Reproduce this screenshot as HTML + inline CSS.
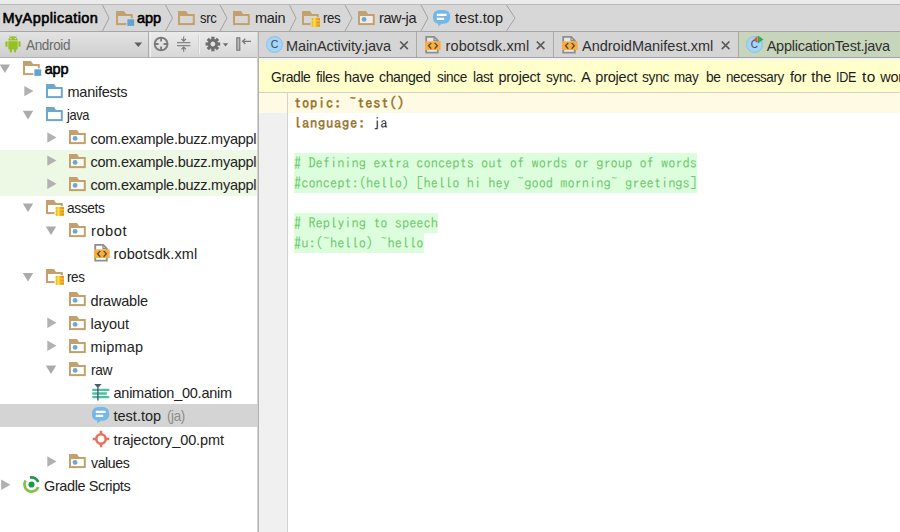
<!DOCTYPE html>
<html>
<head>
<meta charset="utf-8">
<title>MyApplication</title>
<style>
*{box-sizing:border-box;margin:0;padding:0}
html,body{width:900px;height:532px;overflow:hidden;background:#fff}
body{position:relative;font-family:"Liberation Sans",sans-serif;font-size:14.5px;color:#222}
.abs{position:absolute}
.tx{position:absolute;white-space:pre;line-height:20px;height:20px;transform-origin:0 50%}
svg{position:absolute;overflow:visible}
#topstrip{left:0;top:0;width:900px;height:4px;background:#ebebeb}
#topline{left:0;top:4px;width:900px;height:1px;background:#b9b9b9}
#crumbs{left:0;top:5px;width:900px;height:26px;background:#d7d7d7}
#crumbline{left:0;top:31px;width:900px;height:1px;background:#a6a6a6}
#toolbar{left:0;top:32px;width:257px;height:25px;background:linear-gradient(#ebebeb,#d8d8d8)}
#combo{left:0;top:32px;width:149px;height:25px;background:linear-gradient(#e3e3e3,#cfcfcf);border-right:1px solid #ababab}
#toolline{left:0;top:57px;width:257px;height:1px;background:#b2b2b2}
#tree{left:0;top:58px;width:257px;height:474px;background:#fff;overflow:hidden}
#split{left:257px;top:32px;width:2px;height:500px;background:linear-gradient(90deg,#d2d2d2 50%,#b2b2b2 50%)}
#tabs{left:259px;top:32px;width:641px;height:25px;background:#d5d5d5}
.tabsep{position:absolute;top:32px;width:1px;height:25px;background:#a9a9a9}
#tabline{left:259px;top:57px;width:641px;height:1px;background:#a3a3a3}
#tabgap{left:259px;top:58px;width:641px;height:2px;background:#f4f4f4}
#notice{left:259px;top:60px;width:641px;height:32px;background:#ffffcb}
#noticeline{left:259px;top:92px;width:641px;height:1px;background:#d0d2c6}
#gutter{left:259px;top:93px;width:28px;height:439px;background:#f0f0f0}
#gutline{left:287px;top:93px;width:1px;height:439px;background:#d3d3d3}
#curline{left:259px;top:93px;width:641px;height:19.5px;background:#fffae4}
#clip{left:0;top:0;width:257px;height:532px;overflow:hidden}
.hl{position:absolute;left:0;width:258px;background:#edf8e5}
.sel{position:absolute;left:0;width:258px;background:#d4d4d4}
.code{position:absolute;left:294px;height:20px;line-height:20px;font-family:"IPAGothic","Liberation Mono",monospace;font-size:14.4px;white-space:pre;color:#222}
.g{background:#dcfedc;color:#70c870}
.k{color:#94711f;-webkit-text-stroke:0.45px #94711f;letter-spacing:0.8px}
</style>
</head>
<body>
<svg width="0" height="0" style="position:absolute">
<defs>
<linearGradient id="gstk" x1="0" x2="1" y1="0" y2="0"><stop offset="0" stop-color="#f0a012"/><stop offset="0.320" stop-color="#ffe828"/><stop offset="0.600" stop-color="#f2a414"/><stop offset="1" stop-color="#e48c10"/></linearGradient>
<symbol id="i-folder" viewBox="0 0 17 14" overflow="visible"><path d="M0 0h8l2.200 3.200H0z" fill="#c4a06c"/><rect x="1" y="4" width="14.800" height="9.100" fill="none" stroke="#c4a06c" stroke-width="2"/></symbol>
<symbol id="i-bfolder" viewBox="0 0 17 14" overflow="visible"><path d="M0 0h8l2.200 3.200H0z" fill="#6ea7cc"/><rect x="1" y="4" width="14.800" height="9.100" fill="none" stroke="#6ea7cc" stroke-width="2"/></symbol>
<symbol id="i-pkg" viewBox="0 0 17 14" overflow="visible"><path d="M0 0h8l2.200 3.200H0z" fill="#c4a06c"/><rect x="1" y="4" width="14.800" height="9.100" fill="#fff" fill-opacity="0.550" stroke="#c4a06c" stroke-width="2"/><circle cx="6.100" cy="8.400" r="2.400" fill="#6aa9d4"/></symbol>
<symbol id="i-module" viewBox="0 0 19 16" overflow="visible"><path d="M0 0h8l2.200 3.200H0z" fill="#c4a06c"/><rect x="1" y="4" width="14.800" height="9.100" fill="none" stroke="#c4a06c" stroke-width="2"/><rect x="10.400" y="7.300" width="8" height="8" fill="currentColor"/><rect x="11.400" y="8.300" width="6.800" height="6.600" fill="#62a4cf"/></symbol>
<symbol id="i-resf" viewBox="0 0 19 16" overflow="visible"><path d="M0 0h8l2.200 3.200H0z" fill="#c4a06c"/><rect x="1" y="4" width="14.800" height="9.100" fill="none" stroke="#c4a06c" stroke-width="2"/><rect x="8.600" y="6.200" width="10" height="10" fill="currentColor"/><rect x="9.700" y="7.100" width="8.300" height="8.700" rx="0.800" fill="#e2dc9a"/><rect x="9.700" y="7.100" width="8.300" height="2.500" rx="0.700" fill="url(#gstk)"/><rect x="9.700" y="10.200" width="8.300" height="2.500" rx="0.700" fill="url(#gstk)"/><rect x="9.700" y="13.300" width="8.300" height="2.500" rx="0.700" fill="url(#gstk)"/></symbol>
<symbol id="i-xml" viewBox="0 0 16 18" overflow="visible"><path d="M1.200 0.900h8l3.600 3.600v12.200H1.200z" fill="#fff" fill-opacity="0.450" stroke="#8e8e8e" stroke-width="1.800"/><path d="M9 1v3.700h3.700" fill="none" stroke="#8e8e8e" stroke-width="1.300"/><rect x="0" y="5.400" width="15.700" height="8.600" fill="#f6ad42"/><path d="M6.300 6.900l-2.800 2.900 2.800 2.900M9.600 6.900l2.800 2.900-2.800 2.900" fill="none" stroke="#5a4a30" stroke-width="1.300"/></symbol>
<symbol id="i-anim" viewBox="0 0 18 17" overflow="visible"><path d="M1.200 5.900h15.200M1.200 9.500h12.800M1.200 13.100h15.200" stroke="#4ac2a2" stroke-width="2.300" stroke-linecap="round"/><path d="M2.100 0h7.600l-3.100 3.300v13.300h-1.400V3.300z" fill="#4b5b6b"/></symbol>
<symbol id="i-top" viewBox="0 0 18 17" overflow="visible"><path d="M6 0h5.200a6 6 0 0 1 6 6v1.800a6 6 0 0 1-6 6H8.600L5.200 16.600V13.700A6 6 0 0 1 0 7.800V6A6 6 0 0 1 6 0z" fill="#74b9e6"/><path d="M3.800 4.800h9.800M3.800 8.900h7.400" stroke="#fff" stroke-width="2.200"/></symbol>
<symbol id="i-pmt" viewBox="0 0 18 18" overflow="visible"><circle cx="9" cy="9" r="4.7" fill="none" stroke="#e8705a" stroke-width="2.6"/><path d="M9 0.700v3.500M9 13.800v3.500M0.700 9h3.500M13.800 9h3.500" stroke="#e8705a" stroke-width="2.500"/></symbol>
<symbol id="i-gradle" viewBox="0 0 17 17" overflow="visible"><path d="M15.170 10.930A7.100 7.100 0 1 1 2.680 4.430" fill="none" stroke="#86bf49" stroke-width="2.700"/><path d="M7.020 1.560A7.100 7.100 0 0 1 15.170 6.070" fill="none" stroke="#1a9a4e" stroke-width="2.700"/><circle cx="8.500" cy="8.500" r="3.100" fill="#1a9a4e"/></symbol>
<symbol id="i-cls" viewBox="0 0 18 18" overflow="visible"><circle cx="9" cy="9" r="8.3" fill="#b5dcf5" stroke="#5ea9dd" stroke-width="1.2"/></symbol>
</defs></svg>
<div id="topstrip" class="abs"></div><div id="topline" class="abs"></div>
<div id="crumbs" class="abs"></div><div id="crumbline" class="abs"></div>
<svg class="abs" style="left:0;top:5px" width="900" height="26">
<path d="M102.5 0L109 13L102.5 26" fill="none" stroke="#a2a2a2" stroke-width="1"/>
<path d="M165.5 0L172.5 13L165.5 26" fill="none" stroke="#a2a2a2" stroke-width="1"/>
<path d="M220 0L227 13L220 26" fill="none" stroke="#a2a2a2" stroke-width="1"/>
<path d="M289.5 0L296 13L289.5 26" fill="none" stroke="#a2a2a2" stroke-width="1"/>
<path d="M345 0L352 13L345 26" fill="none" stroke="#a2a2a2" stroke-width="1"/>
<path d="M421 0L428 13L421 26" fill="none" stroke="#a2a2a2" stroke-width="1"/>
<path d="M506.5 0L515 13L506.5 26" fill="none" stroke="#a2a2a2" stroke-width="1"/>
</svg>
<svg style="left:115.6px;top:10.8px;color:#d7d7d7" width="19" height="16"><use href="#i-module"/></svg>
<svg style="left:178.0px;top:10.8px;color:#fff" width="17" height="14"><use href="#i-folder"/></svg>
<svg style="left:233.0px;top:10.8px;color:#fff" width="17" height="14"><use href="#i-folder"/></svg>
<svg style="left:302.0px;top:10.8px;color:#d7d7d7" width="19" height="16"><use href="#i-resf"/></svg>
<svg style="left:358.0px;top:10.8px;color:#fff" width="17" height="14"><use href="#i-pkg"/></svg>
<svg style="left:433.0px;top:10.3px;color:#fff" width="18" height="17"><use href="#i-top"/></svg>
<span class="tx" style="left:2.40px;top:8.41px;letter-spacing:0.433px;color:#000;-webkit-text-stroke:0.6px #000">MyApplication</span>
<span class="tx" style="left:137.00px;top:8.41px;letter-spacing:-0.064px;color:#000;-webkit-text-stroke:0.6px #000">app</span>
<span class="tx" style="left:199.50px;top:8.41px;letter-spacing:-0.400px;color:#222;transform:scaleX(0.9027)">src</span>
<span class="tx" style="left:255.00px;top:8.41px;letter-spacing:-0.288px;color:#222">main</span>
<span class="tx" style="left:323.00px;top:8.41px;letter-spacing:-0.400px;color:#222;transform:scaleX(0.9166)">res</span>
<span class="tx" style="left:379.00px;top:8.41px;letter-spacing:-0.400px;color:#222">raw-ja</span>
<span class="tx" style="left:455.00px;top:8.41px;letter-spacing:0.072px;color:#222">test.top</span>
<div id="toolbar" class="abs"></div><div id="combo" class="abs"></div><div id="toolline" class="abs"></div>
<svg style="left:4.800px;top:35.200px" width="16" height="18" viewBox="0 0 16 18"><g fill="#97c024"><path d="M3.300 6.200h9.400v7.200a1 1 0 0 1-1 1H4.300a1 1 0 0 1-1-1z"/><path d="M3.300 5.500a4.700 4.200 0 0 1 9.400 0z"/><rect x="0.400" y="6.200" width="2.200" height="5.800" rx="1.100"/><rect x="13.400" y="6.200" width="2.200" height="5.800" rx="1.100"/><rect x="4.800" y="13" width="2.200" height="4.600" rx="1.100"/><rect x="9" y="13" width="2.200" height="4.600" rx="1.100"/><path d="M4.600 0.600l1.200 1.900M11.400 0.600l-1.200 1.900" stroke="#97c024" stroke-width="0.700"/></g><circle cx="5.900" cy="3.600" r="0.600" fill="#fff"/><circle cx="10.100" cy="3.600" r="0.600" fill="#fff"/></svg>
<span class="tx" style="left:26.00px;top:34.71px;letter-spacing:-0.400px;color:#6b6b6b;transform:scaleX(0.9345)">Android</span>
<svg style="left:0;top:32px" width="258" height="25" viewBox="0 32 258 25">
<path d="M134.400 42.500h7.800l-3.900 4.600z" fill="#5f5f5f"/>
<path d="M150.500 32v25" stroke="#f2f2f2" stroke-width="1"/>
<circle cx="161.100" cy="44" r="6.400" fill="none" stroke="#7a7a7a" stroke-width="1.900"/>
<path d="M161.100 37.500v4M161.100 46.500v4M154.600 44h4M163.600 44h4" stroke="#7a7a7a" stroke-width="1.800"/>
<path d="M177 42.700h13.400M177 45.600h13.400" stroke="#858585" stroke-width="1.200"/>
<path d="M183.700 36.500v4.600M181.400 38.800l2.300 2.400 2.300-2.400M183.700 51.700v-4.600M181.400 49.400l2.300-2.400 2.300 2.400" fill="none" stroke="#777" stroke-width="1.100"/>
<path d="M198.500 35v19" stroke="#d3d3d3" stroke-width="1"/><path d="M199.500 35v19" stroke="#efefef" stroke-width="1"/>
<g transform="translate(212.900 44)" fill="#6e6e6e"><circle r="3.700" fill="none" stroke="#6e6e6e" stroke-width="2.600"/><rect x="-1.600" y="-7.300" width="3.200" height="3.600"/><rect x="-1.600" y="3.700" width="3.200" height="3.600"/><rect x="-7.300" y="-1.600" width="3.600" height="3.200"/><rect x="3.700" y="-1.600" width="3.600" height="3.200"/><g transform="rotate(45)"><rect x="-1.600" y="-7.300" width="3.200" height="3.600"/><rect x="-1.600" y="3.700" width="3.200" height="3.600"/><rect x="-7.300" y="-1.600" width="3.600" height="3.200"/><rect x="3.700" y="-1.600" width="3.600" height="3.200"/></g></g>
<path d="M222.800 43.300h5.400l-2.700 3.200z" fill="#6e6e6e"/>
<rect x="236.800" y="37.800" width="3" height="12.400" fill="#b9b9b9" stroke="#777" stroke-width="1.100"/>
<path d="M251 41.300h-8M245.400 38.600l-2.800 2.700 2.800 2.700" fill="none" stroke="#777" stroke-width="1.300"/>
</svg>
<div id="tree" class="abs"></div>
<div id="clip" class="abs">
<div class="hl" style="top:149.50px;height:46.30px"></div>
<div class="sel" style="top:404.25px;height:22.3px"></div>
<svg style="left:0;top:0" width="258" height="532"><path d="M-0.3 64.5h10.400l-5.200 8.600z" fill="#ababab"/></svg>
<svg style="left:22.6px;top:60.9px;color:#fff" width="19" height="16"><use href="#i-module"/></svg>
<span class="tx" style="left:44.70px;top:59.11px;letter-spacing:-0.214px;color:#000;-webkit-text-stroke:0.6px #000">app</span>
<svg style="left:0;top:0" width="258" height="532"><path d="M24.3 85.9L33.5 91.1L24.3 96.3z" fill="#b1b1b1"/></svg>
<svg style="left:46.0px;top:84.0px;color:#fff" width="17" height="14"><use href="#i-bfolder"/></svg>
<span class="tx" style="left:67.50px;top:82.26px;letter-spacing:-0.250px;color:#222">manifests</span>
<svg style="left:0;top:0" width="258" height="532"><path d="M22.8 110.8h10.400l-5.200 8.600z" fill="#ababab"/></svg>
<svg style="left:46.0px;top:107.2px;color:#fff" width="17" height="14"><use href="#i-bfolder"/></svg>
<span class="tx" style="left:67.49px;top:105.41px;letter-spacing:-0.400px;color:#222;transform:scaleX(0.8853)">java</span>
<svg style="left:0;top:0" width="258" height="532"><path d="M47.3 132.2L56.5 137.4L47.3 142.7z" fill="#b1b1b1"/></svg>
<svg style="left:69.2px;top:130.3px;color:#fff" width="17" height="14"><use href="#i-pkg"/></svg>
<span class="tx" style="left:90.50px;top:128.56px;letter-spacing:-0.256px;color:#222">com.example.buzz.myapplication</span>
<svg style="left:0;top:0" width="258" height="532"><path d="M47.3 155.4L56.5 160.6L47.3 165.8z" fill="#b1b1b1"/></svg>
<svg style="left:69.2px;top:153.5px;color:#fff" width="17" height="14"><use href="#i-pkg"/></svg>
<span class="tx" style="left:90.50px;top:151.71px;letter-spacing:-0.256px;color:#222">com.example.buzz.myapplication</span>
<svg style="left:0;top:0" width="258" height="532"><path d="M47.3 178.6L56.5 183.8L47.3 189.0z" fill="#b1b1b1"/></svg>
<svg style="left:69.2px;top:176.7px;color:#fff" width="17" height="14"><use href="#i-pkg"/></svg>
<span class="tx" style="left:90.50px;top:174.86px;letter-spacing:-0.256px;color:#222">com.example.buzz.myapplication</span>
<svg style="left:0;top:0" width="258" height="532"><path d="M22.8 203.4h10.400l-5.200 8.600z" fill="#ababab"/></svg>
<svg style="left:46.0px;top:199.8px;color:#fff" width="19" height="16"><use href="#i-resf"/></svg>
<span class="tx" style="left:67.30px;top:198.01px;letter-spacing:-0.400px;color:#222;transform:scaleX(0.9507)">assets</span>
<svg style="left:0;top:0" width="258" height="532"><path d="M45.8 226.5h10.400l-5.200 8.600z" fill="#ababab"/></svg>
<svg style="left:69.2px;top:222.9px;color:#fff" width="17" height="14"><use href="#i-pkg"/></svg>
<span class="tx" style="left:90.50px;top:221.16px;letter-spacing:0.500px;color:#222;transform:scaleX(1.0137)">robot</span>
<svg style="left:93.6px;top:243.9px;color:#fff" width="16" height="18"><use href="#i-xml"/></svg>
<span class="tx" style="left:113.50px;top:244.31px;letter-spacing:0.139px;color:#222">robotsdk.xml</span>
<svg style="left:0;top:0" width="258" height="532"><path d="M22.8 272.9h10.400l-5.200 8.600z" fill="#ababab"/></svg>
<svg style="left:46.0px;top:269.2px;color:#fff" width="19" height="16"><use href="#i-resf"/></svg>
<span class="tx" style="left:67.30px;top:267.46px;letter-spacing:-0.400px;color:#222;transform:scaleX(0.9270)">res</span>
<svg style="left:69.2px;top:292.4px;color:#fff" width="17" height="14"><use href="#i-pkg"/></svg>
<span class="tx" style="left:90.50px;top:290.61px;letter-spacing:-0.183px;color:#222">drawable</span>
<svg style="left:0;top:0" width="258" height="532"><path d="M47.3 317.4L56.5 322.7L47.3 327.9z" fill="#b1b1b1"/></svg>
<svg style="left:69.2px;top:315.6px;color:#fff" width="17" height="14"><use href="#i-pkg"/></svg>
<span class="tx" style="left:90.50px;top:313.76px;letter-spacing:-0.033px;color:#222">layout</span>
<svg style="left:0;top:0" width="258" height="532"><path d="M47.3 340.6L56.5 345.8L47.3 351.0z" fill="#b1b1b1"/></svg>
<svg style="left:69.2px;top:338.7px;color:#fff" width="17" height="14"><use href="#i-pkg"/></svg>
<span class="tx" style="left:90.50px;top:336.91px;letter-spacing:0.199px;color:#222">mipmap</span>
<svg style="left:0;top:0" width="258" height="532"><path d="M45.8 365.5h10.400l-5.200 8.600z" fill="#ababab"/></svg>
<svg style="left:69.2px;top:361.9px;color:#fff" width="17" height="14"><use href="#i-pkg"/></svg>
<span class="tx" style="left:90.50px;top:360.06px;letter-spacing:-0.400px;color:#222;transform:scaleX(0.9527)">raw</span>
<svg style="left:91.8px;top:383.9px;color:#fff" width="18" height="17"><use href="#i-anim"/></svg>
<span class="tx" style="left:113.50px;top:383.21px;letter-spacing:-0.246px;color:#222">animation_00.anim</span>
<svg style="left:92.2px;top:407.1px;color:#fff" width="18" height="17"><use href="#i-top"/></svg>
<span class="tx" style="left:113.50px;top:406.36px;letter-spacing:0.001px;color:#222">test.top</span>
<svg style="left:91.8px;top:429.6px;color:#fff" width="18" height="18"><use href="#i-pmt"/></svg>
<span class="tx" style="left:113.50px;top:429.51px;letter-spacing:-0.093px;color:#222">trajectory_00.pmt</span>
<svg style="left:0;top:0" width="258" height="532"><path d="M47.3 456.3L56.5 461.6L47.3 466.8z" fill="#b1b1b1"/></svg>
<svg style="left:69.2px;top:454.4px;color:#fff" width="17" height="14"><use href="#i-pkg"/></svg>
<span class="tx" style="left:90.50px;top:452.66px;letter-spacing:-0.400px;color:#222;transform:scaleX(0.9707)">values</span>
<svg style="left:0;top:0" width="258" height="532"><path d="M1.2 479.5L10.4 484.7L1.2 489.9z" fill="#b1b1b1"/></svg>
<svg style="left:22.6px;top:476.1px;color:#fff" width="17" height="17"><use href="#i-gradle"/></svg>
<span class="tx" style="left:44.00px;top:475.81px;letter-spacing:-0.393px;color:#222">Gradle Scripts</span>
<span class="tx" style="left:166.50px;top:406.36px;letter-spacing:-0.400px;color:#8c8c8c;transform:scaleX(0.9252)">(ja)</span>
</div>
<div id="split" class="abs"></div>
<div id="tabs" class="abs"></div>
<div class="abs" style="left:739px;top:32px;width:161px;height:25px;background:#c7d5bb"></div>
<div class="tabsep" style="left:416px"></div>
<div class="tabsep" style="left:553px"></div>
<div class="tabsep" style="left:738px"></div>
<div id="tabline" class="abs"></div><div id="tabgap" class="abs"></div>
<svg style="left:265.500px;top:35.500px" width="17" height="17" viewBox="0 0 17 17"><circle cx="8.500" cy="8.500" r="8" fill="#a4d4f6" stroke="#84c4f0" stroke-width="1"/><text x="8.600" y="12.300" font-family="Liberation Sans, sans-serif" font-size="10.500" text-anchor="middle" fill="#3f454c">C</text></svg>
<svg style="left:424.6px;top:35.8px;color:#fff" width="16" height="18"><use href="#i-xml"/></svg>
<svg style="left:561.8px;top:35.8px;color:#fff" width="16" height="18"><use href="#i-xml"/></svg>
<svg style="left:746px;top:35px" width="18" height="18" viewBox="0 0 18 18"><circle cx="8.500" cy="9.500" r="8" fill="#a4d4f6" stroke="#84c4f0" stroke-width="1"/><text x="8.400" y="13.200" font-family="Liberation Sans, sans-serif" font-size="10" text-anchor="middle" fill="#3f454c">C</text><path d="M7.500 4.500l4-3.500v7z" fill="#e0524a"/><path d="M17.500 4.500l-5.500-4v8z" fill="#2fae4b"/></svg>
<span class="tx" style="left:286.00px;top:35.51px;letter-spacing:-0.115px;color:#303030">MainActivity.java</span>
<span class="tx" style="left:445.50px;top:35.51px;letter-spacing:0.139px;color:#303030">robotsdk.xml</span>
<span class="tx" style="left:582.00px;top:35.51px;letter-spacing:-0.008px;color:#303030">AndroidManifest.xml</span>
<span class="tx" style="left:766.70px;top:35.51px;letter-spacing:-0.252px;color:#303030">ApplicationTest.java</span>
<svg style="left:0;top:0" width="900" height="60"><path d="M400.2 41.500l7.600 7.600M407.8 41.500l-7.600 7.600" stroke="#5a5a5a" stroke-width="1.700"/></svg>
<svg style="left:0;top:0" width="900" height="60"><path d="M536.8 41.500l7.600 7.600M544.4 41.500l-7.600 7.600" stroke="#5a5a5a" stroke-width="1.700"/></svg>
<svg style="left:0;top:0" width="900" height="60"><path d="M721.8 41.500l7.600 7.600M729.4 41.500l-7.600 7.600" stroke="#5a5a5a" stroke-width="1.700"/></svg>
<div id="notice" class="abs"></div><div id="noticeline" class="abs"></div>
<div class="abs" style="left:259px;top:60px;width:641px;height:32px;overflow:hidden;color:#1c1c1c"><span class="tx" style="left:12.00px;top:7.21px;letter-spacing:-0.400px;transform:scaleX(0.9600)">Gradle</span> <span class="tx" style="left:56.80px;top:7.21px;letter-spacing:-0.400px;transform:scaleX(0.9818)">files</span> <span class="tx" style="left:85.10px;top:7.21px;letter-spacing:-0.400px">have</span> <span class="tx" style="left:120.30px;top:7.21px;letter-spacing:-0.400px;transform:scaleX(0.9723)">changed</span> <span class="tx" style="left:177.60px;top:7.21px;letter-spacing:-0.400px;transform:scaleX(0.9414)">since</span> <span class="tx" style="left:213.70px;top:7.21px;letter-spacing:-0.400px;transform:scaleX(0.9515)">last</span> <span class="tx" style="left:239.40px;top:7.21px;letter-spacing:-0.215px">project</span> <span class="tx" style="left:287.20px;top:7.21px;letter-spacing:-0.400px;transform:scaleX(0.9419)">sync.</span> <span class="tx" style="left:322.20px;top:7.21px;letter-spacing:0.000px;transform:scaleX(1.0200)">A</span> <span class="tx" style="left:336.30px;top:7.21px;letter-spacing:-0.215px">project</span> <span class="tx" style="left:383.10px;top:7.21px;letter-spacing:-0.400px;transform:scaleX(0.9590)">sync</span> <span class="tx" style="left:415.40px;top:7.21px;letter-spacing:-0.400px;transform:scaleX(0.9253)">may</span> <span class="tx" style="left:446.70px;top:7.21px;letter-spacing:-0.400px;transform:scaleX(0.9512)">be</span> <span class="tx" style="left:466.70px;top:7.21px;letter-spacing:-0.400px;transform:scaleX(0.9272)">necessary</span> <span class="tx" style="left:531.00px;top:7.21px;letter-spacing:-0.196px">for</span> <span class="tx" style="left:552.30px;top:7.21px;letter-spacing:-0.046px">the</span> <span class="tx" style="left:577.43px;top:7.21px;letter-spacing:-0.400px;transform:scaleX(0.8678)">IDE</span> <span class="tx" style="left:603.00px;top:7.21px;letter-spacing:0.500px;transform:scaleX(1.0616)">to</span> <span class="tx" style="left:621.30px;top:7.21px;letter-spacing:-0.350px">work</span> <span class="tx" style="left:653.00px;top:7.21px;letter-spacing:-0.350px">properly.</span></div>
<div id="gutter" class="abs"></div><div id="curline" class="abs"></div><div id="gutline" class="abs"></div>
<div class="code" style="top:92.8px"><span class="k">topic:</span> <span class="k">~test()</span></div>
<div class="code" style="top:112.8px"><span class="k">language:</span> ja</div>
<div class="code g" style="top:152.8px"># Defining extra concepts out of words or group of words</div>
<div class="code g" style="top:172.8px">#concept:(hello) [hello hi hey ~good morning~ greetings]</div>
<div class="code g" style="top:212.8px"># Replying to speech</div>
<div class="code g" style="top:232.8px">#u:(~hello) ~hello</div>
</body>
</html>
